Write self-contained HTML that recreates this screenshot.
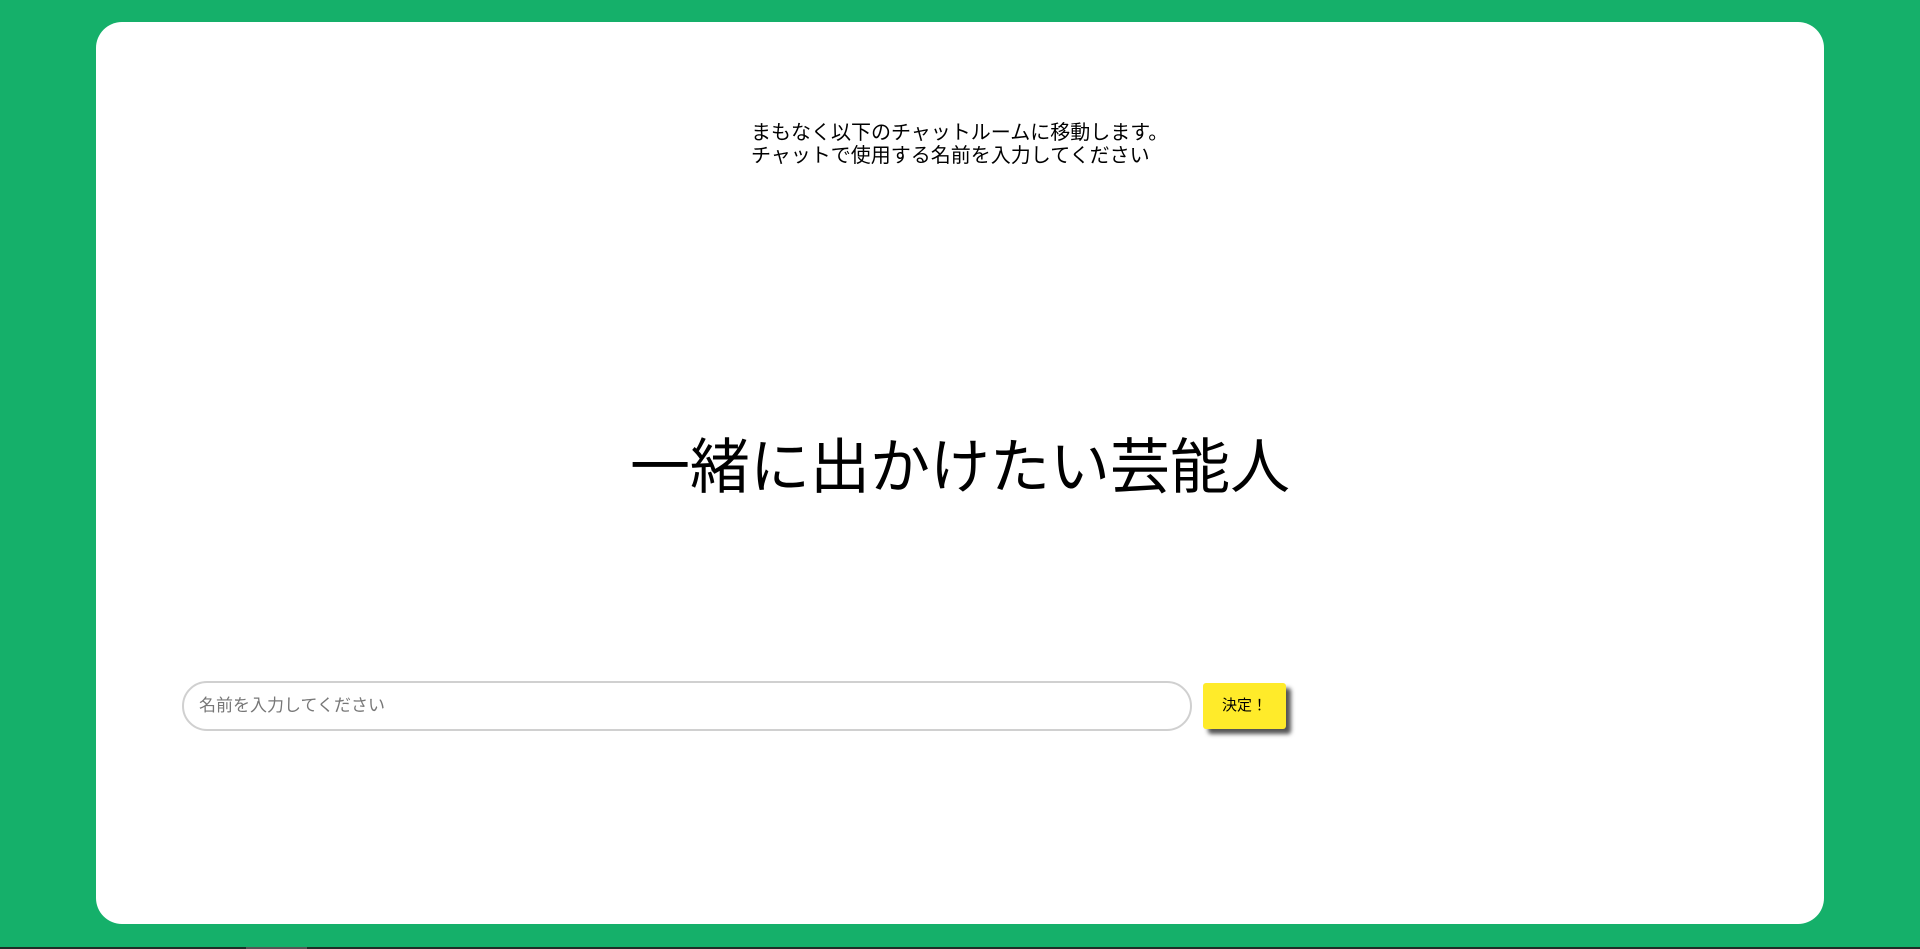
<!DOCTYPE html>
<html><head><meta charset="utf-8"><style>
html,body{margin:0;padding:0;width:1920px;height:949px;overflow:hidden;background:#15b06a;font-family:"Liberation Sans","Noto Sans CJK JP",sans-serif;}
.card{position:absolute;left:96px;top:22px;width:1728px;height:902px;background:#fff;border-radius:26px;}
.msg{position:absolute;left:751px;top:122px;font-size:20px;line-height:23px;color:#000;white-space:nowrap;}
.title{position:absolute;left:0;width:1920px;top:430px;text-align:center;font-size:60px;line-height:76px;color:#000;}
.input{position:absolute;left:182px;top:681px;width:1006px;height:46px;border:2px solid #d0d0d0;border-radius:26px;box-sizing:content-box;}
.input span{position:absolute;left:15px;top:13px;font-size:17px;line-height:20px;color:#777;}
.btn{position:absolute;left:1203px;top:683px;width:83px;height:46px;background:#ffeb2a;border-radius:3px;box-shadow:5px 5px 4px #555;font-size:15px;line-height:46px;text-align:center;color:#000;}
.bar{position:absolute;left:0;top:947px;width:1920px;height:2px;background:#1e2d26;}
.bar2{position:absolute;left:246px;top:947px;width:61px;height:2px;background:#555;}
</style></head><body>
<div class="card"></div>
<div class="msg">まもなく以下のチャットルームに移動します。<br>チャットで使用する名前を入力してください</div>
<div class="title">一緒に出かけたい芸能人</div>
<div class="input"><span>名前を入力してください</span></div>
<div class="btn">決定！</div>
<div class="bar"></div><div class="bar2"></div>
</body></html>
